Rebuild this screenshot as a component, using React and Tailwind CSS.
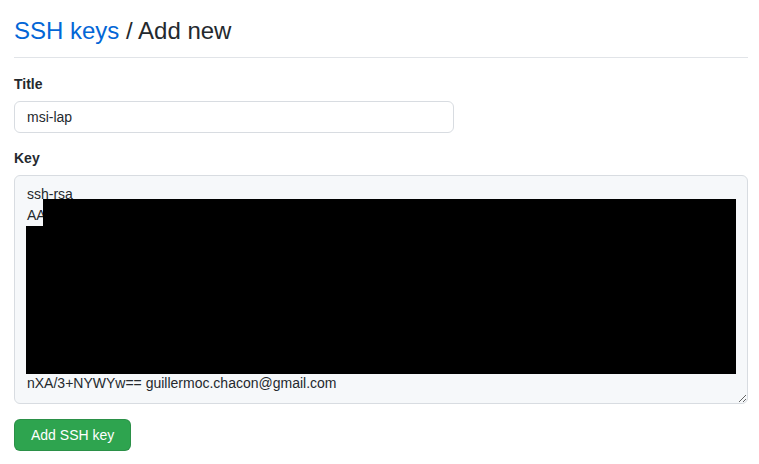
import React from 'react';

const keyText = [
  'ssh-rsa',
  'AAAAB3NzaC1yc2EAAAADAQABAAABAQC',
  'xxxxxxxxxxxxxxxxxxxxxxxxxxxxxxxx',
  'xxxxxxxxxxxxxxxxxxxxxxxxxxxxxxxx',
  'xxxxxxxxxxxxxxxxxxxxxxxxxxxxxxxx',
  'xxxxxxxxxxxxxxxxxxxxxxxxxxxxxxxx',
  'xxxxxxxxxxxxxxxxxxxxxxxxxxxxxxxx',
  'xxxxxxxxxxxxxxxxxxxxxxxxxxxxxxxx',
  'xxxxxxxxxxxxxxxxxxxxxxxxxxxxxxxx',
  'nXA/3+NYWYw== guillermoc.chacon@gmail.com',
].join('\n');

const App = () => {
  return (
    <div className="min-h-[464px] bg-white text-[#24292e] font-['Liberation_Sans',Arial,sans-serif] text-sm leading-[21px]">
      <div className="ml-[14px] w-[734px] pt-[13px]">
        <div className="pb-2 border-b border-[#e1e4e8]">
          <h2 className="text-[24px] leading-[36px] font-normal">
            <a href="#" className="text-[#0366d6]">SSH keys</a> / Add new
          </h2>
        </div>

        <form className="mt-4">
          <div>
            <label className="block font-bold mb-[6px]">Title</label>
            <input
              type="text"
              defaultValue="msi-lap"
              className="block w-[440px] h-8 px-3 rounded-md border border-[#d8dce1] bg-white text-[#24292e] text-sm outline-none"
            />
          </div>

          <div className="mt-[15px]">
            <label className="block font-bold mb-[6px]">Key</label>
            <div className="relative">
              <textarea
                readOnly
                defaultValue={keyText}
                className="block w-full h-[229px] px-3 pt-2 pb-[9px] rounded-md border border-[#d8dce1] bg-[#f6f8fa] text-[#24292e] text-sm leading-[21px] outline-none overflow-hidden"
              />
              {/* redaction */}
              <div className="absolute left-[29px] top-[24px] w-[693px] h-[27px] bg-black" />
              <div className="absolute left-[12px] top-[51px] w-[710px] h-[148px] bg-black" />
            </div>
          </div>

          <button
            type="button"
            className="mt-[15px] h-8 px-4 rounded-md border border-[rgba(27,31,35,0.15)] bg-[#2ea44f] text-white text-sm"
          >
            Add SSH key
          </button>
        </form>
      </div>
    </div>
  );
};

export default App;
